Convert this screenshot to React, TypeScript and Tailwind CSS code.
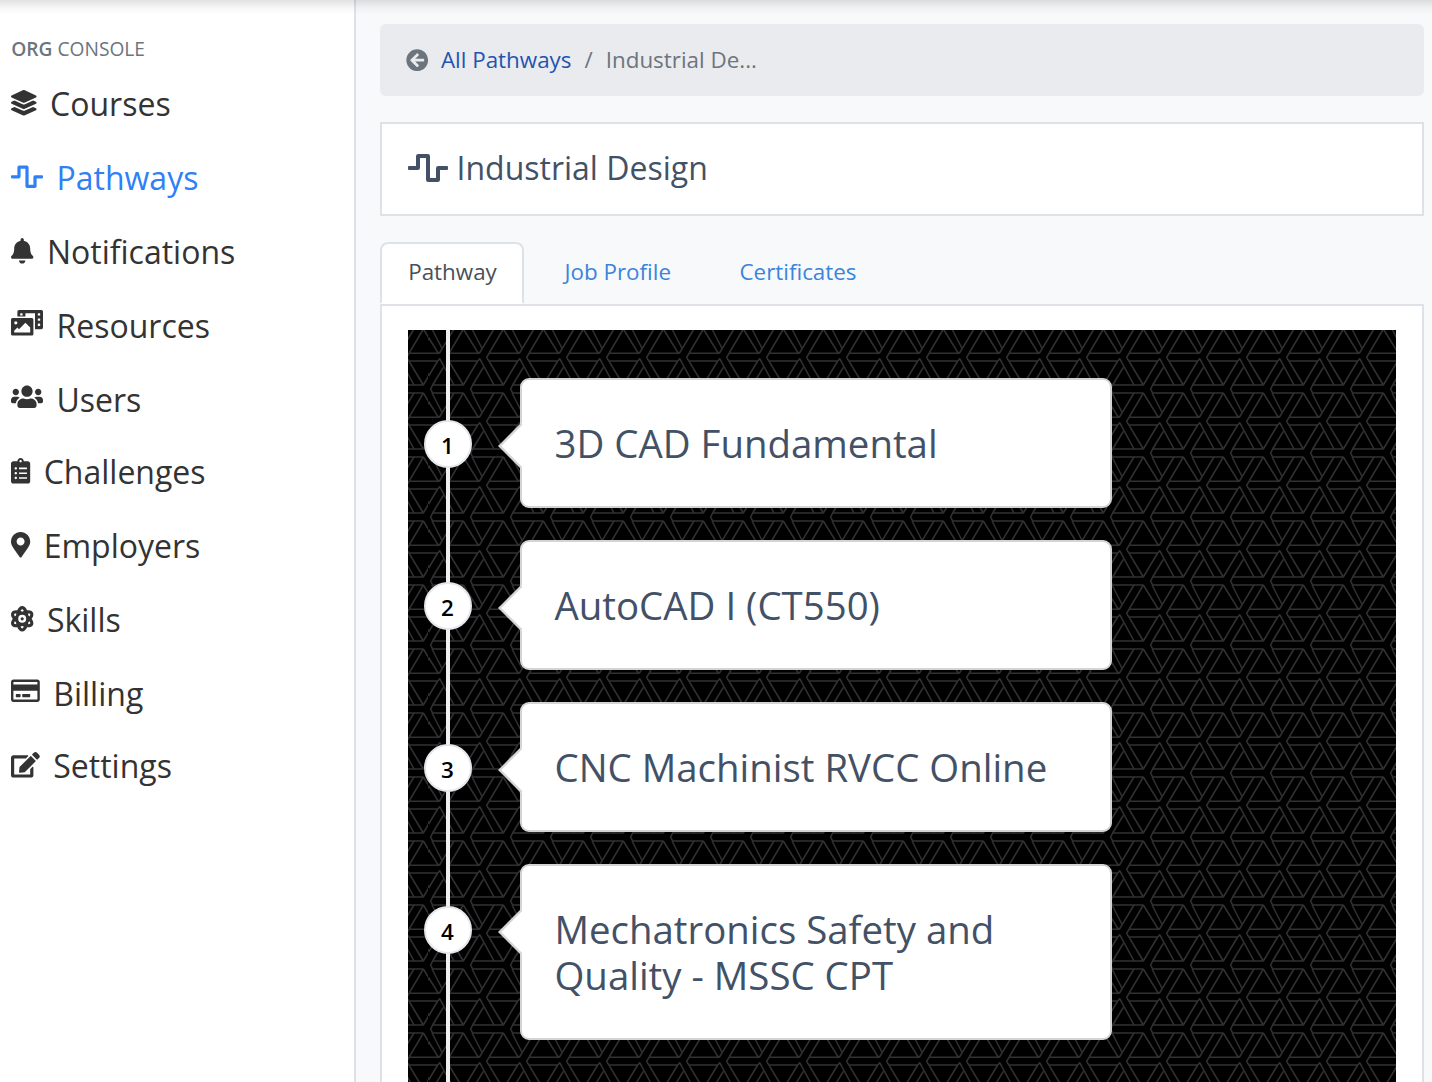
import React from "react";
import {
  FaArrowCircleLeft,
  FaAtom,
  FaBell,
  FaClipboardList,
  FaEdit,
  FaLayerGroup,
  FaMapMarkerAlt,
  FaPhotoVideo,
  FaRegCreditCard,
  FaUsers,
  FaWaveSquare,
} from "react-icons/fa";

const navItems = [
  { label: "Courses", Icon: FaLayerGroup, icon: "w-[25.6px] mt-[23.5px]", row: "h-[74px]" },
  { label: "Pathways", Icon: FaWaveSquare, icon: "w-8 mt-[23.5px]", row: "h-[74px]", active: true },
  { label: "Notifications", Icon: FaBell, icon: "w-[22.4px] mt-[23.5px]", row: "h-[74px]" },
  { label: "Resources", Icon: FaPhotoVideo, icon: "w-8 mt-[21.5px]", row: "h-[74px]" },
  { label: "Users", Icon: FaUsers, icon: "w-8 mt-[21.5px]", row: "h-[72px]" },
  { label: "Challenges", Icon: FaClipboardList, icon: "w-[19.2px] mt-[23.5px]", row: "h-[74px]" },
  { label: "Employers", Icon: FaMapMarkerAlt, icon: "w-[19.2px] mt-[23.5px]", row: "h-[74px]" },
  { label: "Skills", Icon: FaAtom, icon: "w-[22.4px] mt-[23.5px]", row: "h-[74px]" },
  { label: "Billing", Icon: FaRegCreditCard, icon: "w-[28.8px] mt-[21.5px]", row: "h-[72px]" },
  { label: "Settings", Icon: FaEdit, icon: "w-[28.8px] mt-[23.5px]", row: "h-[74px]" },
];

const steps = [
  { title: "3D CAD Fundamental", height: "h-[130px]" },
  { title: "AutoCAD I (CT550)", height: "h-[130px]" },
  { title: "CNC Machinist RVCC Online", height: "h-[130px]" },
  { title: "Mechatronics Safety and Quality - MSSC CPT", height: "h-[176px]" },
];

const weave =
  "M100 12L50 97L100 180M100 12L142 80L147 85M126 12L157 72M192 12L148 85M57 85H148M57 108H143M143 108L100 180M160 127L128 180L122 192L128 204M143 108L149 101L192 180M128 180H220M128 204H220";

const tileOffsets = [
  [-120, 0], [0, 0], [120, 0],
  [-120, -192], [0, -192], [120, -192],
];

function WeaveBackground() {
  return (
    <svg className="absolute inset-0 h-full w-full" aria-hidden="true">
      <defs>
        <pattern
          id="weave"
          width="120"
          height="192"
          patternUnits="userSpaceOnUse"
          patternTransform="translate(22 -5) scale(0.333333)"
        >
          {tileOffsets.map(([x, y]) => (
            <path
              key={`${x},${y}`}
              d={weave}
              transform={`translate(${x} ${y})`}
              fill="none"
              stroke="#313131"
              strokeWidth="4.6"
              strokeLinejoin="round"
            />
          ))}
        </pattern>
      </defs>
      <rect width="100%" height="100%" fill="#000" />
      <rect width="100%" height="100%" fill="url(#weave)" />
    </svg>
  );
}

function Sidebar() {
  return (
    <aside className="w-[356px] shrink-0 border-r-2 border-[#dee2e6] bg-white pt-[36px] pl-[11.2px]">
      <div className="h-[30px] text-[19.2px] leading-[26px] text-[#6c757d]">
        <span className="font-semibold">ORG</span> CONSOLE
      </div>
      <nav>
        {navItems.map(({ label, Icon, icon, row, active }) => (
          <div
            key={label}
            className={`flex items-start gap-[13.3px] ${row} ${active ? "text-[#2f80f7]" : "text-[#333]"}`}
          >
            <Icon className={`h-[25.6px] shrink-0 overflow-visible ${icon}`} />
            <span className="mt-[14px] text-[32px] leading-[48px]">{label}</span>
          </div>
        ))}
      </nav>
    </aside>
  );
}

function Step({ index, title, height }: { index: number; title: string; height: string }) {
  return (
    <li className="relative flex items-start">
      <span className="ml-4 mt-[42px] flex size-12 items-center justify-center rounded-full border-2 border-[#e4e8ec] bg-white pt-[4px] pr-px text-[22.4px] font-semibold text-black">
        {index}
      </span>
      <div className={`relative ml-12 flex w-[592px] items-center rounded-[9px] border-2 border-[#d4d4d4] bg-white pl-[32.5px] pr-8 ${height}`}>
        <span className="absolute top-[50px] -left-[17px] size-8 rotate-45 border-b-2 border-l-2 border-[#d4d4d4] bg-white" />
        <h3 className="relative text-[38.4px] leading-[46px] text-[#435166]">{title}</h3>
      </div>
    </li>
  );
}

export default function App() {
  return (
    <div className="relative flex h-[1082px] overflow-hidden bg-[#f8f9fb] font-['Open_Sans',sans-serif]">
      <Sidebar />
      <main className="min-w-0 flex-1 pt-6 pr-2 pl-6">
        <div className="flex h-[72px] items-center rounded-md bg-[#eaebee] pl-[26px] text-[22.4px] text-[#6c757d]">
          <FaArrowCircleLeft className="size-[22.4px]" />
          <span className="ml-[12.5px] text-[#1f55b0]">All Pathways</span>
          <span className="mx-[13px]">/</span>
          <span>Industrial De...</span>
        </div>

        <div className="mt-[26px] flex h-[94px] items-center border-2 border-[#dee2e6] bg-white pb-[2px] pl-[26px] text-[#435166]">
          <FaWaveSquare className="h-8 w-10" />
          <h1 className="ml-[8.5px] text-[32px]">Industrial Design</h1>
        </div>

        <div className="mt-[26px] flex h-[62px] text-[22.4px] text-[#3a85dc]">
          <div className="flex w-[144px] items-center justify-center rounded-t-lg border-2 border-[#dee2e6] border-b-white bg-white pb-[2px] pl-px text-[#495057]">
            Pathway
          </div>
          <div className="flex items-center pb-[2px] pl-[40.5px]">Job Profile</div>
          <div className="flex items-center pb-[2px] pl-[68.5px]">Certificates</div>
        </div>

        <section className="h-[800px] border-2 border-[#dee2e6] bg-white px-[26px] pt-6">
          <div className="relative h-[780px] overflow-hidden bg-black">
            <WeaveBackground />
            <div className="absolute inset-y-0 left-[38px] w-1 bg-[#f0f0f0]" />
            <ol className="flex flex-col gap-8 pt-12">
              {steps.map((step, i) => (
                <Step key={step.title} index={i + 1} title={step.title} height={step.height} />
              ))}
            </ol>
          </div>
        </section>
      </main>
      <div className="pointer-events-none absolute inset-x-0 top-0 h-4 bg-gradient-to-b from-black/12 via-black/3 to-transparent" />
    </div>
  );
}
